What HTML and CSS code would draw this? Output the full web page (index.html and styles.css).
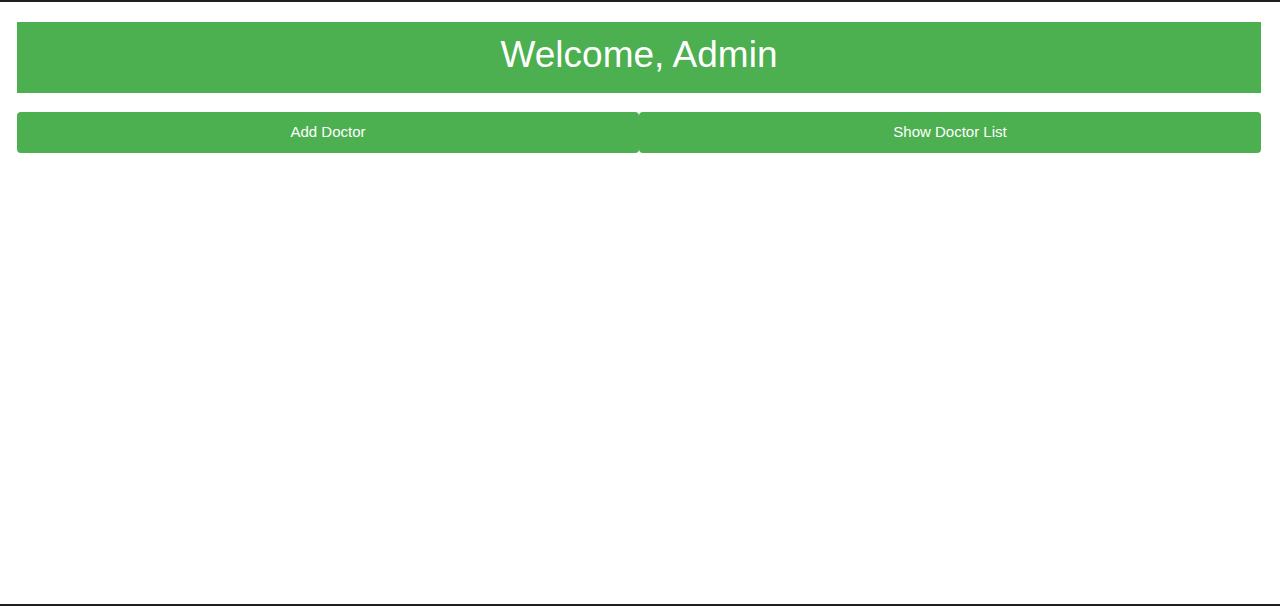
FILE: index.html
```html
<!DOCTYPE html>
<html>
<head>
<meta charset="utf-8">
<link rel="stylesheet" href="styles.css">
</head>
<body>
<div class="frame">
  <header class="banner"><h1 class="title">Welcome, Admin</h1></header>
  <nav class="actions">
    <button class="btn">Add Doctor</button>
    <button class="btn">Show Doctor List</button>
  </nav>
</div>
</body>
</html>
```
FILE: styles.css
```css
html, body { margin: 0; padding: 0; background: #fff; }
.frame {
  box-sizing: border-box;
  height: 606px;
  border-top: 2px solid #1f1f1f;
  border-bottom: 2px solid #1f1f1f;
  padding: 20px 19px 0 17px;
  font-family: "Liberation Sans", Arial, sans-serif;
}
.banner {
  box-sizing: border-box;
  background: #4caf50;
  height: 71px;
  padding-bottom: 7px;
  display: flex;
  align-items: center;
  justify-content: center;
}
.title {
  margin: 0;
  color: #fff;
  font-weight: normal;
  font-size: 37px;
  line-height: 1;
}
.actions {
  display: flex;
  margin-top: 19px;
}
.btn {
  flex: 1;
  height: 41px;
  border: none;
  border-radius: 4px;
  background: #4caf50;
  color: #fff;
  font-family: "Liberation Sans", Arial, sans-serif;
  font-size: 15px;
  padding: 0 0 2px 0;
}
```
